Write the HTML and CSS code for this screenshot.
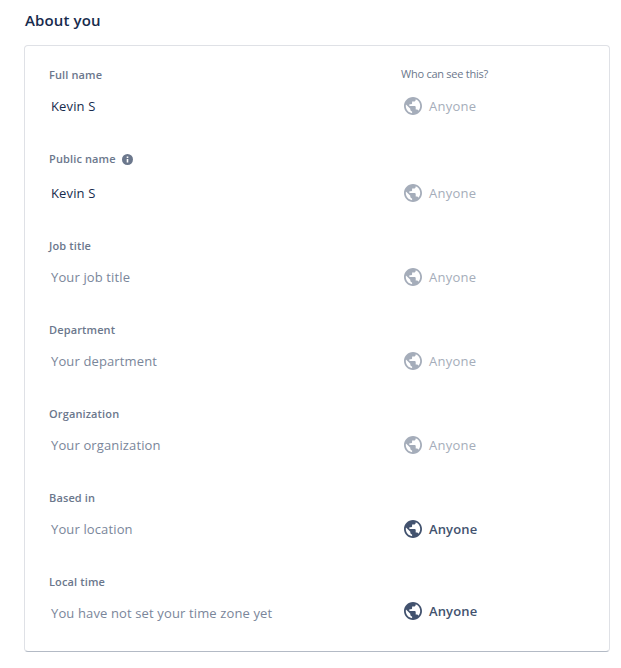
FILE: index.html
```
<!DOCTYPE html>
<html lang="en">
<head>
  <meta charset="UTF-8">
  <meta name="viewport" content="width=device-width, initial-scale=1.0">
  <title>About you</title>
  <link rel="stylesheet" href="styles.css">
</head>
<body>
  <svg class="sprite" aria-hidden="true">
    <symbol id="globe" viewBox="2 2 20 20">
      <path fill="currentColor" d="M12 2C6.48 2 2 6.48 2 12s4.48 10 10 10 10-4.48 10-10S17.52 2 12 2zm-1 17.93c-3.95-.49-7-3.85-7-7.93 0-.62.08-1.21.21-1.79L9 15v1c0 1.1.9 2 2 2v1.93zm6.9-2.54c-.26-.81-1-1.39-1.9-1.39h-1v-3c0-.55-.45-1-1-1H8v-2h2c.55 0 1-.45 1-1V7h2c1.1 0 2-.9 2-2v-.41c2.93 1.19 5 4.06 5 7.41 0 2.08-.8 3.97-2.1 5.39z"/>
    </symbol>
  </svg>

  <h2 class="title">About you</h2>

  <div class="card">
    <div class="field">
      <div class="label">Full name</div>
      <div class="hint">Who can see this?</div>
      <div class="value">Kevin S</div>
      <div class="privacy disabled"><svg class="globe"><use href="#globe"/></svg><span>Anyone</span></div>
    </div>
    <div class="field with-info">
      <div class="label">Public name
        <svg class="info" viewBox="0 0 11 11"><circle cx="5.5" cy="5.5" r="5.5" fill="#6b778c"/><path fill="#fff" d="M4.7 2.4h1.6V4H4.7zM4.7 5h1.6v3.5H4.7z"/></svg>
      </div>
      <div class="value">Kevin S</div>
      <div class="privacy disabled"><svg class="globe"><use href="#globe"/></svg><span>Anyone</span></div>
    </div>
    <div class="field">
      <div class="label">Job title</div>
      <div class="value empty">Your job title</div>
      <div class="privacy disabled"><svg class="globe"><use href="#globe"/></svg><span>Anyone</span></div>
    </div>
    <div class="field">
      <div class="label">Department</div>
      <div class="value empty">Your department</div>
      <div class="privacy disabled"><svg class="globe"><use href="#globe"/></svg><span>Anyone</span></div>
    </div>
    <div class="field">
      <div class="label">Organization</div>
      <div class="value empty">Your organization</div>
      <div class="privacy disabled"><svg class="globe"><use href="#globe"/></svg><span>Anyone</span></div>
    </div>
    <div class="field">
      <div class="label">Based in</div>
      <div class="value empty">Your location</div>
      <div class="privacy"><svg class="globe"><use href="#globe"/></svg><span>Anyone</span></div>
    </div>
    <div class="field local-time">
      <div class="label">Local time</div>
      <div class="value empty">You have not set your time zone yet</div>
      <div class="privacy"><svg class="globe"><use href="#globe"/></svg><span>Anyone</span></div>
    </div>
  </div>
</body>
</html>
```
FILE: styles.css
```
* {
  box-sizing: border-box;
}

body {
  margin: 0;
  padding: 8px 11px 0 24px;
  background-color: #fff;
  color: #172b4d;
  font-family: "Open Sans", "Noto Sans", sans-serif;
  font-size: 13px;
  letter-spacing: 0.13px;
  line-height: 20px;
}

.sprite {
  display: none;
}

.title {
  margin: 0 0 13px 1px;
  font-size: 15px;
  font-weight: 600;
  line-height: 24px;
}

.card {
  height: 607px;
  padding: 21px 24px 0;
  border: 1px solid #dfe1e6;
  border-bottom-color: #b3bac5;
  border-radius: 4px;
}

.field {
  display: grid;
  grid-template-columns: 352px 1fr;
  grid-template-rows: 16px 46px;
  height: 84px;
}

.with-info {
  grid-template-rows: 16px 52px;
  height: 87px;
}

.label {
  display: flex;
  grid-column: 1;
  align-items: center;
  gap: 6px;
  color: #6b778c;
  font-size: 11px;
  font-weight: 600;
  line-height: 16px;
}

.hint {
  color: #6b778c;
  font-size: 11px;
  letter-spacing: -0.25px;
  line-height: 14px;
}

.info {
  width: 11px;
  height: 11px;
}

.value {
  grid-column: 1;
  align-self: center;
  padding-left: 2px;
}

.empty {
  color: #7a869a;
}

.privacy {
  display: flex;
  align-items: center;
  align-self: center;
  gap: 7px;
  padding-left: 3px;
  color: #42526e;
  font-weight: 600;
}

.disabled {
  color: #a5adba;
  font-weight: 400;
  letter-spacing: 0.25px;
}

.globe {
  width: 18px;
  height: 18px;
}

.local-time .privacy {
  margin-bottom: 4px;
}
```
